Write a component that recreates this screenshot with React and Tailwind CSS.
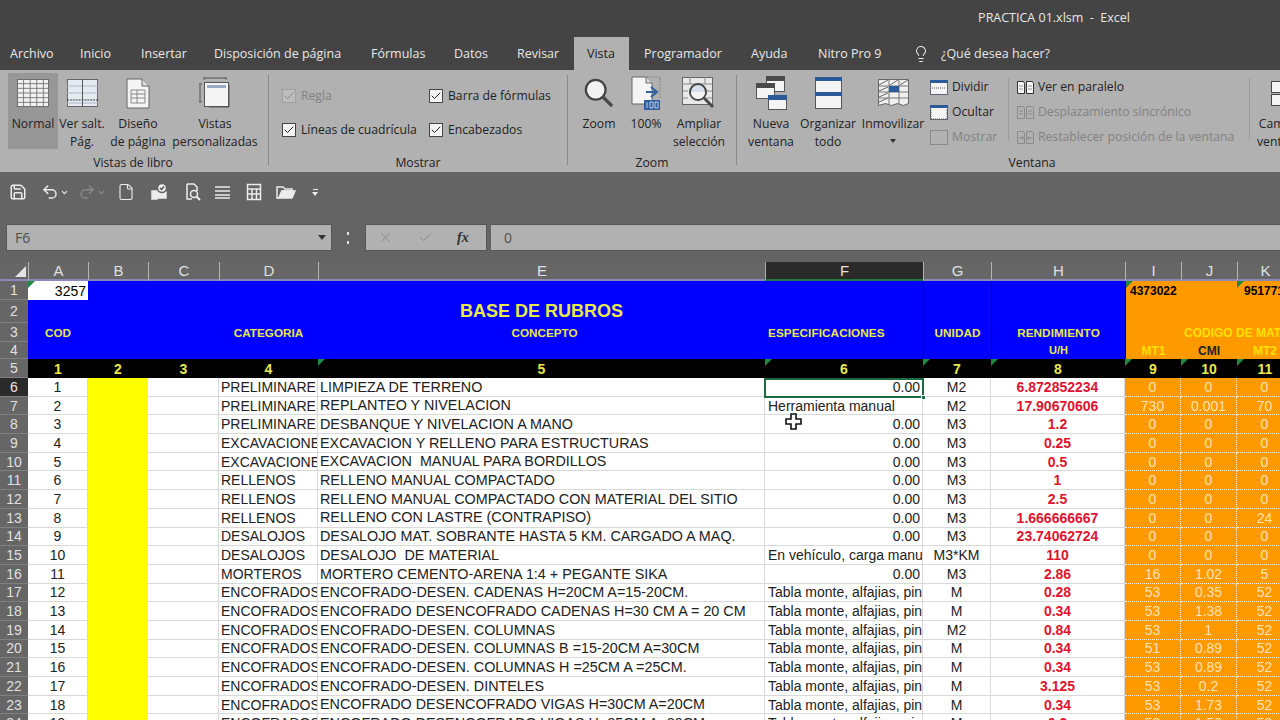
import { Save, Undo2, Redo2, File, ChevronDown, Lightbulb, X, Check } from 'lucide-react';

const UI_FONT = 'font-["Open_Sans","Noto_Sans",sans-serif]';

const tabs = [
  { label: 'Archivo', cls: 'w-[80px] pl-[10px]' },
  { label: 'Inicio', cls: 'w-[61px]' },
  { label: 'Insertar', cls: 'w-[73px]' },
  { label: 'Disposición de página', cls: 'w-[157px]' },
  { label: 'Fórmulas', cls: 'w-[83px]' },
  { label: 'Datos', cls: 'w-[63px]' },
  { label: 'Revisar', cls: 'w-[57px]' },
  { label: 'Vista', cls: 'w-[55px] pl-[13px] bg-[#b1b1b1] text-[#222]' },
  { label: 'Programador', cls: 'w-[122px] pl-[15px]' },
  { label: 'Ayuda', cls: 'w-[67px]' },
  { label: 'Nitro Pro 9', cls: 'w-[94px]' },
];

const rows = [
  [1, 'PRELIMINARES', 'LIMPIEZA DE TERRENO', '0.00', 'M2', '6.872852234', '0', '0', '0'],
  [2, 'PRELIMINARES', 'REPLANTEO Y NIVELACION', 'Herramienta manual', 'M2', '17.90670606', '730', '0.001', '70'],
  [3, 'PRELIMINARES', 'DESBANQUE Y NIVELACION A MANO', '0.00', 'M3', '1.2', '0', '0', '0'],
  [4, 'EXCAVACIONES', 'EXCAVACION Y RELLENO PARA ESTRUCTURAS', '0.00', 'M3', '0.25', '0', '0', '0'],
  [5, 'EXCAVACIONES', 'EXCAVACION  MANUAL PARA BORDILLOS', '0.00', 'M3', '0.5', '0', '0', '0'],
  [6, 'RELLENOS', 'RELLENO MANUAL COMPACTADO', '0.00', 'M3', '1', '0', '0', '0'],
  [7, 'RELLENOS', 'RELLENO MANUAL COMPACTADO CON MATERIAL DEL SITIO', '0.00', 'M3', '2.5', '0', '0', '0'],
  [8, 'RELLENOS', 'RELLENO CON LASTRE (CONTRAPISO)', '0.00', 'M3', '1.666666667', '0', '0', '24'],
  [9, 'DESALOJOS', 'DESALOJO MAT. SOBRANTE HASTA 5 KM. CARGADO A MAQ.', '0.00', 'M3', '23.74062724', '0', '0', '0'],
  [10, 'DESALOJOS', 'DESALOJO  DE MATERIAL', 'En vehículo, carga manual', 'M3*KM', '110', '0', '0', '0'],
  [11, 'MORTEROS', 'MORTERO CEMENTO-ARENA 1:4 + PEGANTE SIKA', '0.00', 'M3', '2.86', '16', '1.02', '5'],
  [12, 'ENCOFRADOS', 'ENCOFRADO-DESEN. CADENAS H=20CM A=15-20CM.', 'Tabla monte, alfajias, pingos', 'M', '0.28', '53', '0.35', '52'],
  [13, 'ENCOFRADOS', 'ENCOFRADO DESENCOFRADO CADENAS H=30 CM A = 20 CM', 'Tabla monte, alfajias, pingos', 'M', '0.34', '53', '1.38', '52'],
  [14, 'ENCOFRADOS', 'ENCOFRADO-DESEN. COLUMNAS', 'Tabla monte, alfajias, pingos', 'M2', '0.84', '53', '1', '52'],
  [15, 'ENCOFRADOS', 'ENCOFRADO-DESEN. COLUMNAS B =15-20CM A=30CM', 'Tabla monte, alfajias, pingos', 'M', '0.34', '51', '0.89', '52'],
  [16, 'ENCOFRADOS', 'ENCOFRADO-DESEN. COLUMNAS H =25CM A =25CM.', 'Tabla monte, alfajias, pingos', 'M', '0.34', '53', '0.89', '52'],
  [17, 'ENCOFRADOS', 'ENCOFRADO-DESEN. DINTELES', 'Tabla monte, alfajias, pingos', 'M', '3.125', '53', '0.2', '52'],
  [18, 'ENCOFRADOS', 'ENCOFRADO DESENCOFRADO VIGAS H=30CM A=20CM', 'Tabla monte, alfajias, pingos', 'M', '0.34', '53', '1.73', '52'],
  [19, 'ENCOFRADOS', 'ENCOFRADO DESENCOFRADO VIGAS H=25CM A=20CM', 'Tabla monte, alfajias, pingos', 'M', '0.3', '53', '1.50', '52'],
];

const Tick = () => (
  <span className="absolute top-0 left-0 w-0 h-0 border-t-[7px] border-r-[7px] border-t-[#1f8a3f] border-r-transparent" />
);

const BigBtn = ({ icon, lines, cls, drop }) => (
  <div className={`flex flex-col items-center shrink-0 ${cls}`}>
    <div className="h-[40px] shrink-0 flex items-center justify-center">{icon}</div>
    <div className="mt-[2px] text-center leading-[18px] whitespace-nowrap">
      {lines.map(l => <div key={l}>{l}</div>)}
    </div>
    {drop && <div className="mt-[6px] w-0 h-0 border-x-[3px] border-x-transparent border-t-[4px] border-t-[#333]" />}
  </div>
);

const CheckRow = ({ label, on = true, disabled }) => (
  <div className={`flex items-center gap-[5px] h-[18px] whitespace-nowrap ${disabled ? 'text-[#828282]' : ''}`}>
    <span className={`w-[14px] h-[14px] border flex items-center justify-center ${disabled ? 'border-[#a0a0a0] bg-[#bdbdbd]' : 'border-[#444] bg-[#f4f4f4]'}`}>
      {on && <Check size={12} strokeWidth={2} className={disabled ? 'text-[#8a8a8a]' : 'text-[#222]'} />}
    </span>
    {label}
  </div>
);

const Group = ({ label, cls, labelCls = '', children }) => (
  <div className={`relative shrink-0 h-full flex flex-col ${cls}`}>
    <div className="flex-1 flex min-h-0">{children}</div>
    <div className={`h-[20px] -mb-[1px] leading-[20px] text-center ${labelCls}`}>{label}</div>
  </div>
);

const Sep = () => <div className="w-px h-[90px] mt-[5px] bg-[#8a8a8a] shrink-0" />;

const NormalIcon = () => (
  <svg width="32" height="28" viewBox="0 0 34 30" preserveAspectRatio="none">
    <rect x="0.5" y="0.5" width="33" height="29" fill="#f2f2f2" stroke="#666" />
    <path d="M0 5h34M0 10h34M0 15h34M0 20h34M0 25h34M7 0v30M14 0v30M21 0v30M28 0v30" stroke="#777" strokeWidth="1" />
  </svg>
);
const PageBreakIcon = () => (
  <svg width="31" height="28" viewBox="0 0 32 28" preserveAspectRatio="none">
    <rect x="0.5" y="0.5" width="31" height="27" fill="#e6ebf2" stroke="#666" />
    <path d="M0 7h32M0 14h32M0 24h32" stroke="#a9b6c8" />
    <path d="M0 21h32" stroke="#333" strokeDasharray="2 1" />
    <path d="M16 0v28" stroke="#555" />
  </svg>
);
const PageIcon = () => (
  <svg width="24" height="31" viewBox="0 0 24 31">
    <path d="M1 1h15l7 7v22H1z" fill="#f4f4f4" stroke="#666" />
    <path d="M16 1v7h7" fill="#ddd" stroke="#666" />
    <path d="M5 12h14v13H5zM5 16h14M5 20h14M11 12v13" fill="none" stroke="#888" />
  </svg>
);
const CustomViewIcon = () => (
  <svg width="32" height="32" viewBox="0 0 32 32">
    <path d="M5 1h22M1 7v18M5 0v3M27 0v3M0 7h3M0 25h3" stroke="#555" fill="none" />
    <rect x="5.5" y="5.5" width="24" height="24" fill="#f4f4f4" stroke="#555" />
    <rect x="8" y="8" width="19" height="3" fill="#9aa9c4" />
    <path d="M10 30h20V8" stroke="#555" fill="none" />
  </svg>
);
const ZoomIcon = () => (
  <svg width="30" height="30" viewBox="0 0 32 32">
    <circle cx="12.5" cy="12.5" r="10.5" fill="#f2f2f2" stroke="#444" strokeWidth="2.4" />
    <path d="M20 20l10 10" stroke="#4a4a4a" strokeWidth="3.6" />
  </svg>
);
const HundredIcon = () => (
  <svg width="30" height="34" viewBox="0 0 30 34">
    <path d="M1 1h14l6 6v21H1z" fill="#f4f4f4" stroke="#666" />
    <path d="M15 1h14v22" fill="none" stroke="#888" strokeDasharray="2 1" />
    <path d="M15 1v6h6" fill="#ddd" stroke="#666" />
    <path d="M15 16h9M20 11l6 5-6 5" fill="none" stroke="#2f5f9f" strokeWidth="2" />
    <rect x="13" y="24" width="16" height="10" fill="#2f5f9f" />
    <path d="M16 26v6M19 26h3v6h-3zM24 26h3v6h-3z" fill="none" stroke="#dfe7f2" strokeWidth="0.8" />
  </svg>
);
const ZoomSelIcon = () => (
  <svg width="34" height="32" viewBox="0 0 34 32">
    <rect x="0.5" y="0.5" width="30" height="27" fill="#e8e8e8" stroke="#666" />
    <path d="M0 7h30M0 14h6M0 21h6M8 0v7M23 0v7M25 14h6M25 21h6" stroke="#888" />
    <circle cx="16" cy="15" r="8" fill="#d6dfeb" stroke="#444" strokeWidth="2" />
    <path d="M9 15h14a7 7 0 0 1-14 0" fill="#f4f4f4" />
    <path d="M22 21l9 9" stroke="#4a4a4a" strokeWidth="3" />
  </svg>
);
const NewWinIcon = () => (
  <svg width="31" height="34" viewBox="0 0 31 34">
    <rect x="10.5" y="0.5" width="18" height="15" fill="#f4f4f4" stroke="#555" />
    <rect x="10" y="0" width="19" height="5" fill="#4a4a4a" />
    <rect x="0.5" y="7.5" width="18" height="15" fill="#f4f4f4" stroke="#555" />
    <rect x="0" y="7" width="19" height="5" fill="#4a4a4a" />
    <rect x="12.5" y="19.5" width="18" height="14" fill="#f4f4f4" stroke="#555" />
    <rect x="12" y="19" width="19" height="5" fill="#2b5a9a" />
  </svg>
);
const ArrangeIcon = () => (
  <svg width="27" height="32" viewBox="0 0 27 32">
    <rect x="0.5" y="0.5" width="26" height="31" fill="#f4f4f4" stroke="#555" />
    <rect x="0" y="0" width="27" height="4" fill="#2b5a9a" />
    <rect x="0" y="15" width="27" height="4" fill="#2b5a9a" />
  </svg>
);
const FreezeIcon = () => (
  <svg width="31" height="28" viewBox="0 0 31 28">
    <path d="M0.5 0.5h30v24l-5 2-6-2-6 2-6-2-7 2z" fill="#f0f0f0" stroke="#666" />
    <path d="M1 6l9-5M12 6l8-5M22 6l8-5M1 12l9-4M1 18l9-4M1 23l9-4" stroke="#666" />
    <path d="M0 7h31M0 13h31M0 19h31M11 0v25M21 0v25" stroke="#777" />
    <rect x="11" y="7" width="10" height="6" fill="#2b5a9a" />
  </svg>
);
const WinSmall = ({ color = '#2b5a9a', dotted, disabled, low }) => (
  <svg width="18" height="15" viewBox="0 0 18 15" className="shrink-0">
    <rect x="0.5" y="0.5" width="17" height="14" fill={disabled ? 'none' : '#f4f4f4'} stroke={disabled ? '#8a8a8a' : '#667'} />
    {!disabled && <rect x="0" y="0" width="18" height="3" fill={color} />}
    {dotted && <path d={low ? 'M1 14h16M1 14v-9M17 14v-9' : 'M2 8h14'} stroke="#555" strokeDasharray="1 1" />}
  </svg>
);
const SideBySide = ({ disabled, arrows }) => (
  <svg width="17" height="13" viewBox="0 0 17 13" className="shrink-0">
    <path d="M0.5 0.5h6l1 2v10h-7zM9.5 0.5h6l1 2v10h-7z" fill={disabled ? 'none' : '#f4f4f4'} stroke={disabled ? '#8a8a8a' : '#333'} />
    {arrows
      ? <path d="M1.5 7h5M4.5 5l2 2-2 2M15.5 7h-5M12.5 5l-2 2 2 2" fill="none" stroke="#8a8a8a" />
      : <path d="M2 5h4M2 8h4M11 5h4M11 8h4" stroke={disabled ? '#8a8a8a' : '#999'} />}
  </svg>
);

const QatIcon = ({ children, w = 20 }) => (
  <svg width={w} height="18" viewBox={`0 0 ${w} 18`} fill="none" stroke="#ececec" strokeWidth="1.5" className="shrink-0">{children}</svg>
);

const TitleTabs = () => (
  <div className="h-[70px] bg-[#444444] text-[#e8e8e8] flex flex-col">
    <div className="h-[37px] pr-[150px] pt-[9px] flex justify-end text-[12.5px] leading-[18px] whitespace-pre">PRACTICA 01.xlsm  -  Excel</div>
    <div className="h-[33px] flex text-[12.5px] leading-[33px]">
      {tabs.map(t => <div key={t.label} className={`${t.cls} shrink-0 whitespace-nowrap`}>{t.label}</div>)}
      <Lightbulb size={18} strokeWidth={1.4} className="mt-[8px] shrink-0" />
      <div className="ml-[11px] whitespace-nowrap">¿Qué desea hacer?</div>
    </div>
  </div>
);

const Ribbon = () => (
  <div className="h-[102px] bg-[#b1b1b1] text-[#222] text-[12.2px] flex overflow-hidden">
    <Group label="Vistas de libro" cls="w-[268px]" labelCls="pr-[2px]">
      <div className="w-[8px]" />
      <BigBtn cls="w-[50px] mt-[3px] h-[76px] bg-[#979797]" icon={<NormalIcon />} lines={['Normal']} />
      <BigBtn cls="w-[48px] mt-[3px]" icon={<PageBreakIcon />} lines={['Ver salt.', 'Pág.']} />
      <BigBtn cls="w-[64px] mt-[3px]" icon={<PageIcon />} lines={['Diseño', 'de página']} />
      <BigBtn cls="w-[90px] mt-[3px]" icon={<CustomViewIcon />} lines={['Vistas', 'personalizadas']} />
    </Group>
    <Sep />
    <Group label="Mostrar" cls="w-[298px]">
      <div className="pl-[13px] pt-[17px] flex flex-col gap-[16px] w-[160px]">
        <CheckRow label="Regla" disabled />
        <CheckRow label="Líneas de cuadrícula" />
      </div>
      <div className="pt-[17px] flex flex-col gap-[16px]">
        <CheckRow label="Barra de fórmulas" />
        <CheckRow label="Encabezados" />
      </div>
    </Group>
    <Sep />
    <Group label="Zoom" cls="w-[168px]">
      <div className="w-[7px]" />
      <BigBtn cls="w-[48px] mt-[3px]" icon={<ZoomIcon />} lines={['Zoom']} />
      <BigBtn cls="w-[46px] mt-[3px]" icon={<HundredIcon />} lines={['100%']} />
      <BigBtn cls="w-[60px] mt-[3px]" icon={<ZoomSelIcon />} lines={['Ampliar', 'selección']} />
    </Group>
    <Sep />
    <Group label="Ventana" cls="w-[512px]" labelCls="pl-[78px]">
      <div className="w-[6px]" />
      <BigBtn cls="w-[56px] mt-[3px]" icon={<NewWinIcon />} lines={['Nueva', 'ventana']} />
      <BigBtn cls="w-[58px] mt-[3px]" icon={<ArrangeIcon />} lines={['Organizar', 'todo']} />
      <BigBtn cls="w-[72px] mt-[3px]" icon={<FreezeIcon />} lines={['Inmovilizar']} drop />
      <div className="w-[1px]" />
      <div className="pt-[8px] flex flex-col gap-[7px] w-[78px]">
        <div className="flex items-center gap-[4px] h-[18px]"><WinSmall dotted />Dividir</div>
        <div className="flex items-center gap-[4px] h-[18px]"><WinSmall dotted low />Ocultar</div>
        <div className="flex items-center gap-[4px] h-[18px] text-[#828282]"><WinSmall disabled />Mostrar</div>
      </div>
      <div className="w-px h-[62px] mt-[8px] bg-[#9a9a9a]" />
      <div className="pl-[8px] pt-[8px] flex flex-col gap-[7px]">
        <div className="flex items-center gap-[4px] h-[18px] whitespace-nowrap"><SideBySide />Ver en paralelo</div>
        <div className="flex items-center gap-[4px] h-[18px] whitespace-nowrap text-[#828282]"><SideBySide disabled />Desplazamiento sincrónico</div>
        <div className="flex items-center gap-[4px] h-[18px] whitespace-nowrap text-[#828282]"><SideBySide disabled arrows />Restablecer posición de la ventana</div>
      </div>
    </Group>
    <div className="w-px h-[62px] mt-[8px] bg-[#9a9a9a] shrink-0" />
    <div className="pl-[7px] shrink-0 flex flex-col items-start mt-[3px]">
      <div className="h-[40px] shrink-0 flex items-center pl-[14px]">
        <svg width="24" height="28" viewBox="0 0 24 28"><rect x="0.5" y="2.5" width="23" height="11" fill="#f4f4f4" stroke="#444" /><rect x="0.5" y="15.5" width="23" height="11" fill="#f4f4f4" stroke="#444" /></svg>
      </div>
      <div className="mt-[2px] leading-[18px] whitespace-nowrap text-center">Cambiar<br />ventanas</div>
    </div>
  </div>
);

const Qat = () => (
  <div className="h-[52px] bg-[#646464] flex items-start pt-[11px] pl-[9px] text-[#ececec]">
    <Save size={18} strokeWidth={2} className="shrink-0" />
    <Undo2 size={18} strokeWidth={2} className="ml-[14px] shrink-0" />
    <ChevronDown size={9} strokeWidth={3} className="ml-[1px] mt-[5px] shrink-0" />
    <Redo2 size={18} strokeWidth={1.8} className="ml-[9px] text-[#8a8a8a] shrink-0" />
    <ChevronDown size={9} strokeWidth={3} className="ml-[1px] mt-[5px] text-[#8a8a8a] shrink-0" />
    <File size={18} strokeWidth={1.5} className="ml-[11px] shrink-0" />
    <div className="ml-[14px] shrink-0">
      <QatIcon>
        <path d="M3 8h5v8H3zM8 9h9v6H8zM8 5h8" fill="#ececec" />
        <circle cx="13" cy="5" r="4.5" fill="#ececec" stroke="#646464" />
        <path d="M11 5l1.5 1.5L15 3.5" stroke="#555" />
      </QatIcon>
    </div>
    <div className="ml-[15px] shrink-0">
      <QatIcon w={18}>
        <path d="M3 1h7l3 3v4M3 1v15h5" />
        <circle cx="10" cy="11" r="3.5" />
        <path d="M12.5 13.5l3.5 3.5" strokeWidth="2" />
      </QatIcon>
    </div>
    <div className="ml-[12px] shrink-0">
      <QatIcon w={17}>
        <path d="M1 4h15M1 8h15M1 12h15M1 15h15" />
      </QatIcon>
    </div>
    <div className="ml-[15px] shrink-0">
      <QatIcon w={16}>
        <rect x="1.5" y="1.5" width="13" height="15" />
        <path d="M1.5 6h13M1.5 11h13M6 6v10M10.5 6v10" />
      </QatIcon>
    </div>
    <div className="ml-[14px] shrink-0">
      <QatIcon>
        <path d="M1 15V4h6l2 2h7v2H6L3 15z" fill="none" />
        <path d="M3 15l3-7h13l-3 7z" fill="#ececec" />
      </QatIcon>
    </div>
    <div className="ml-[16px] mt-[6px] flex flex-col items-center gap-[2px] shrink-0">
      <div className="w-[5px] h-px bg-[#ececec]" />
      <div className="w-0 h-0 border-x-[3px] border-x-transparent border-t-[4px] border-t-[#ececec]" />
    </div>
  </div>
);

const FormulaBar = () => (
  <div className="h-[38px] bg-[#646464] flex text-[#4f4f4f] text-[14px]">
    <div className="w-[326px] h-[27px] ml-[6px] bg-[#b1b1b1] border border-[#565656] flex items-center justify-between pl-[8px] pr-[5px] shrink-0">
      F6
      <div className="w-0 h-0 border-x-[4px] border-x-transparent border-t-[5px] border-t-[#333]" />
    </div>
    <div className="w-[2px] h-[12px] mt-[8px] ml-[15px] border-y-[3px] border-[#e4e4e4] bg-[#646464] shrink-0" />
    <div className="w-[122px] h-[27px] ml-[16px] bg-[#b1b1b1] border border-[#565656] flex items-center pl-[12px] shrink-0">
      <X size={15} strokeWidth={1.6} className="text-[#8a8a8a]" />
      <Check size={15} strokeWidth={1.6} className="ml-[25px] text-[#8a8a8a]" />
      <span className="ml-[24px] italic font-['Liberation_Serif',serif] font-bold text-[14px] text-[#333]">fx</span>
    </div>
    <div className="flex-1 h-[27px] ml-[4px] bg-[#b1b1b1] border-y border-[#565656] flex items-center pl-[13px]">0</div>
  </div>
);

const RowHead = ({ n, active }) => (
  <div className={`flex items-center justify-center text-[14px] border-b border-[#808080] ${active ? 'bg-[#2a2a2a] text-[#e8e8e8]' : 'bg-[#666666] text-[#e0e0e0]'}`}>{n}</div>
);

const Blue = ({ children, cls = '' }) => (
  <div className={`bg-[#0000ff] text-[#e8e84a] text-[11.7px] font-bold flex items-center justify-center whitespace-nowrap ${cls}`}>{children}</div>
);
const Orange = ({ children, cls = '' }) => (
  <div className={`bg-[#ff9900] text-[12px] font-bold flex items-center whitespace-nowrap ${cls}`}>{children}</div>
);
const Black = ({ children, tick }) => (
  <div className="relative bg-black text-[#e8e84a] text-[14px] font-bold flex items-center justify-center">{tick && <Tick />}{children}</div>
);

const Sheet = () => (
  <div className="font-['Liberation_Sans',Arial,sans-serif] text-[14px] text-[#222] bg-white grid grid-cols-[28px_60px_60px_71px_99px_447px_158px_68px_134px_56px_56px_56px] grid-rows-[19px_19px_23px_19px_17px_19px] auto-rows-[18.69px] leading-none">
    {/* encabezado de columnas */}
    <div className="bg-[#666666] relative border-b-2 border-[#8a8ab8]">
      <div className="absolute right-[2px] bottom-[2px] w-0 h-0 border-l-[11px] border-l-transparent border-b-[11px] border-b-[#e4e4e4]" />
    </div>
    {['A', 'B', 'C', 'D', 'E', 'F', 'G', 'H', 'I', 'J', 'K'].map(c => (
      <div key={c} className={`flex items-center justify-center text-[15px] border-l ${c === 'F' ? 'bg-[#2a2a2a] text-[#e0e0e0] border-[#aaa] border-b-2 border-b-[#1d7a3a]' : 'bg-[#666666] text-[#e0e0e0] border-[#b5b5b5] border-b-2 border-b-[#8a8ab8]'}`}>{c}</div>
    ))}

    {/* fila 1 */}
    <RowHead n="1" />
    <div className="relative bg-white text-black flex items-center justify-end pr-[2px]"><Tick />3257</div>
    <Blue /><Blue /><Blue /><Blue /><Blue />
    <Blue cls="border-l border-black" />
    <Blue cls="border-l border-black" />
    <Orange cls="relative border-l border-black text-black text-[11px] pl-[4px]"><Tick />4373022</Orange>
    <Orange />
    <Orange cls="relative text-black text-[11px] pl-[7px]"><Tick />9517719</Orange>

    {/* fila 2 */}
    <RowHead n="2" />
    <Blue /><Blue /><Blue /><Blue />
    <Blue cls="text-[18px] pb-[2px]">BASE DE RUBROS</Blue>
    <Blue />
    <Blue cls="border-l border-black" />
    <Blue cls="border-l border-black" />
    <Orange cls="border-l border-black" /><Orange /><Orange />

    {/* fila 3 */}
    <RowHead n="3" />
    <Blue>COD</Blue>
    <Blue /><Blue />
    <Blue>CATEGORIA</Blue>
    <Blue cls="pl-[6px] text-[11.2px]">CONCEPTO</Blue>
    <Blue cls="justify-start pl-[3px] text-[10.3px] tracking-[0.1px]">ESPECIFICACIONES</Blue>
    <Blue cls="border-l border-black text-[10.3px] tracking-[0.1px]">UNIDAD</Blue>
    <Blue cls="border-l border-black text-[10.3px] tracking-[0.1px]">RENDIMIENTO</Blue>
    <Orange cls="border-l border-black" />
    <Orange cls="relative z-10 text-[#ffe000] pl-[3px]">CODIGO DE MATERIALES</Orange>
    <Orange />

    {/* fila 4 */}
    <RowHead n="4" />
    <Blue /><Blue /><Blue /><Blue /><Blue /><Blue />
    <Blue cls="border-l border-black" />
    <Blue cls="border-l border-black text-[11px]">U/H</Blue>
    <Orange cls="border-l border-black text-[#ffe000] justify-center">MT1</Orange>
    <Orange cls="text-[#222] justify-center">CMI</Orange>
    <Orange cls="text-[#ffe000] justify-center">MT2</Orange>

    {/* fila 5 */}
    <RowHead n="5" />
    <Black>1</Black><Black>2</Black><Black>3</Black><Black>4</Black>
    <Black tick>5</Black><Black tick>6</Black><Black tick>7</Black><Black tick>8</Black>
    <Black tick>9</Black><Black tick>10</Black><Black tick>11</Black>

    {rows.map((r, i) => {
      const rowNo = i + 6;
      const numeric = r[3] === '0.00';
      const line = 'border-b border-r border-[#d9d9d9]';
      return [
        <RowHead key={`h${rowNo}`} n={rowNo} active={rowNo === 6} />,
        <div key={`a${rowNo}`} className={`flex items-center justify-center ${line}`}>{r[0]}</div>,
        <div key={`b${rowNo}`} className="bg-[#ffff00]" />,
        <div key={`c${rowNo}`} className={line} />,
        <div key={`d${rowNo}`} className={`flex items-center pl-[2px] overflow-hidden whitespace-nowrap ${line}`}>{r[1]}</div>,
        <div key={`e${rowNo}`} className={`flex items-center pl-[2px] overflow-hidden whitespace-pre text-[14.35px] ${line}`}>{r[2]}</div>,
        <div key={`f${rowNo}`} className={`flex items-center overflow-hidden whitespace-nowrap ${line} ${numeric ? 'justify-end pr-[2px]' : 'pl-[3px]'}`}>
          {r[3]}
        </div>,
        <div key={`g${rowNo}`} className={`flex items-center justify-center whitespace-nowrap ${line}`}>{r[4]}</div>,
        <div key={`h2${rowNo}`} className={`flex items-center justify-center font-bold text-[#e0142e] ${line}`}>{r[5]}</div>,
        ...[r[6], r[7], r[8]].map((v, j) => (
          <div key={`o${rowNo}-${j}`} className="flex items-center justify-center bg-[#ff9900] text-[#ffe3b0] border-b border-r border-dotted border-[#fff0d8]">{v}</div>
        )),
      ];
    })}
  </div>
);

const App = () => (
  <div className={`relative w-[1280px] h-[720px] overflow-hidden bg-[#646464] ${UI_FONT}`}>
    <TitleTabs />
    <Ribbon />
    <Qat />
    <FormulaBar />
    <Sheet />
    {/* marco de la celda activa */}
    <div className="absolute left-[764px] top-[378px] w-[160px] h-[20px] border-2 border-[#1d6b40]" />
    <div className="absolute left-[921px] top-[395px] w-[5px] h-[5px] bg-[#1d6b40] border border-white" />
    {/* cursor */}
    <svg className="absolute left-[785px] top-[413px]" width="17" height="17" viewBox="0 0 17 17">
      <path d="M6 1h5v5h5v5h-5v5H6v-5H1V6h5z" fill="#fff" stroke="#111" strokeWidth="1.6" />
    </svg>
  </div>
);

export default App;
